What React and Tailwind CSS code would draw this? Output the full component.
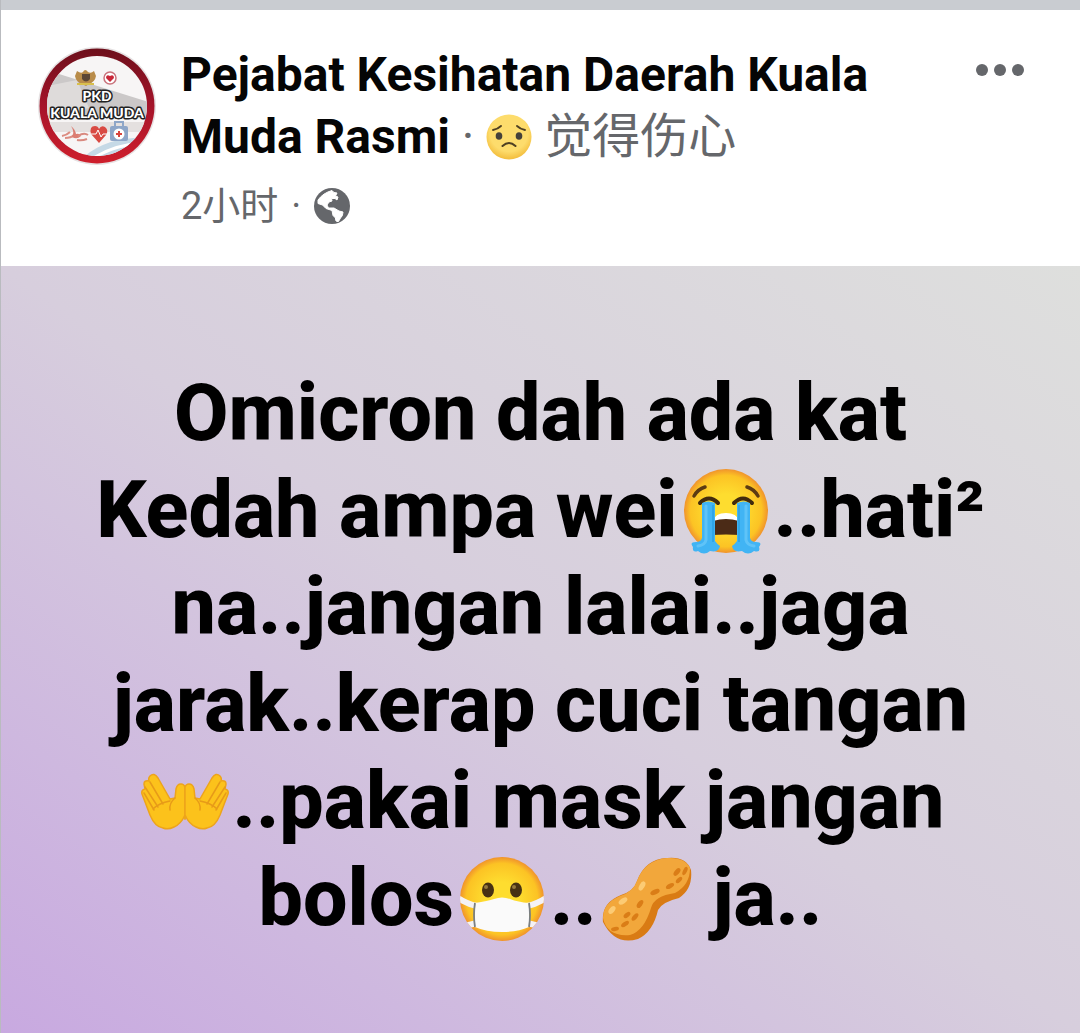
import { useState } from "react";

const Logo = () => (
    <svg className="w-30 h-30 mt-0.5 shrink-0" viewBox="0 0 120 120" role="img" aria-label="PKD Kuala Muda">
        <defs>
            <linearGradient id="ring" x1="0" y1="0" x2="0" y2="1">
                <stop offset="0" stopColor="#6d0f1b" />
                <stop offset="0.5" stopColor="#a5142a" />
                <stop offset="1" stopColor="#cf1f2c" />
            </linearGradient>
            <clipPath id="disc">
                <circle cx="60" cy="60" r="50" />
            </clipPath>
        </defs>
        <circle cx="60" cy="60" r="59" fill="#e6e2e3" />
        <circle cx="60" cy="60" r="57.5" fill="url(#ring)" />
        <circle cx="60" cy="60" r="50" fill="#f7f5f5" />
        <g clipPath="url(#disc)">
            <path d="M22 28 L112 56 V72 H10 V40 Z" fill="#cbc8c8" />
            <path d="M10 40 L40 34 L52 62 L10 70 Z" fill="#dedbda" />
            <path d="M10 76 H112 V86 H10 Z" fill="#e4e0df" />
            <path d="M48 110 Q72 90 112 92 V116 H48 Z" fill="#c5d9e6" />
            <path d="M58 111 Q82 97 106 98" stroke="#fff" strokeWidth="3" fill="none" />
        </g>
        {/* Coat of arms */}
        <path d="M40 25 q4 3 6 1 q2 -4 5 0 q3 2 6 -1 l2 5 q-1 6 -7 8 l-3 2 l-4 -2 q-6 -2 -7 -8z" fill="#b98c4a" />
        <path d="M45 28 h8 v5 q-4 5 -8 0z" fill="#5b4636" />
        <path d="M40 38 h17" stroke="#d8bf4c" strokeWidth="2" />
        <circle cx="73" cy="32" r="6" fill="#fff" stroke="#c9737c" strokeWidth="1.5" />
        <path d="M73 36 l-4 -4 q0 -4 4 -2 q4 -2 4 2z" fill="#c92637" />
        {/* Ribbon, heart and first aid kit */}
        <path d="M25 90 q5 -1 8 -4 M28 92 q6 0 9 -3" stroke="#dc8d82" strokeWidth="2" fill="none" />
        <path d="M34 80 q4 3 5 8 q4 -1 5 2 q-4 4 -9 1 q3 -5 -1 -11z" fill="#dc7d72" />
        <path d="M41 90 q6 -4 10 -1 M40 94 q5 1 10 -1" stroke="#d98a80" strokeWidth="2" fill="none" />
        <path d="M62 97 L54 88 q-2 -8 4 -8 q3 0 4 3 q2 -4 6 -2 q4 3 1 8z" fill="#d94a43" />
        <path d="M54 88 h5 l2 -4 3 7 2 -3 h4" stroke="#fff" strokeWidth="1" fill="none" />
        <rect x="73" y="80" width="18" height="15" rx="2" fill="#8ea6c8" />
        <path d="M78 80 v-4 h8 v4" stroke="#8ea6c8" strokeWidth="2" fill="none" />
        <circle cx="82" cy="88" r="5.5" fill="#fff" />
        <path d="M82 85 v6 M79 88 h6" stroke="#d8453e" strokeWidth="2" />
        <g
            fill="#fff"
            stroke="#222"
            strokeWidth="3"
            paintOrder="stroke"
            strokeLinejoin="round"
            textAnchor="middle"
            fontFamily="Lato, sans-serif"
            fontWeight="900"
        >
            <text x="60" y="55" fontSize="14">PKD</text>
            <text x="60" y="72" fontSize="14">KUALA MUDA</text>
        </g>
    </svg>
);

const Globe = () => (
    <svg className="w-9 h-9" viewBox="0 0 36 36" role="img" aria-label="Public">
        <circle cx="18" cy="18" r="18" fill="#65676b" />
        <path
            d="M4 12 Q9 5 18 2.5 L20 4.5 L23 5 L21.5 8 L24 9 L23 12 L21 10.5 L17.5 10.5 L18 13 L15 14 L13 17 L14.5 20 L20 20 L25 23 L29 24 Q29 28 26.5 30 L24.5 33.5 Q21 34 21.5 30 L19 27.5 L18 22.5 L12 20.5 L8.5 17 L4 15.5 Z"
            fill="#fff"
            stroke="#fff"
            strokeLinejoin="round"
        />
    </svg>
);

const SadFace = () => (
    <svg className="inline-block w-[46px] h-[46px] align-[-7px]" viewBox="0 0 46 46" role="img" aria-label="Sad">
        <defs>
            <radialGradient id="sad" cx="0.5" cy="0.4" r="0.6">
                <stop offset="0.7" stopColor="#fddc6c" />
                <stop offset="1" stopColor="#f3bd3c" />
            </radialGradient>
        </defs>
        <circle cx="23" cy="23" r="22.5" fill="url(#sad)" />
        <ellipse cx="13" cy="22" rx="3.3" ry="3.8" fill="#45413a" />
        <ellipse cx="33" cy="22" rx="3.3" ry="3.8" fill="#45413a" />
        <path d="M7 16 Q12 15 15 12 M39 16 Q34 15 31 12" stroke="#4f4022" strokeWidth="1.8" fill="none" strokeLinecap="round" />
        <path d="M16.5 32 Q23 26 29.5 32" stroke="#4f4022" strokeWidth="2" fill="none" strokeLinecap="round" />
    </svg>
);

const FaceGradient = ({ id }) => (
    <radialGradient id={id} cx="0.5" cy="0.5" r="0.5">
        <stop offset="0.4" stopColor="#fedd2f" />
        <stop offset="0.85" stopColor="#fcc324" />
        <stop offset="1" stopColor="#f0932c" />
    </radialGradient>
);

const CryingFace = () => (
    <svg className="inline-block w-[88px] h-[88px] mx-1 align-[-19px]" viewBox="0 0 88 88" role="img" aria-label="Crying">
        <defs>
            <FaceGradient id="cry" />
        </defs>
        <circle cx="44" cy="43" r="42" fill="url(#cry)" />
        <path d="M12 28 Q16 21 23 19 M76 28 Q72 21 65 19" stroke="#5c3b13" strokeWidth="3.5" fill="none" strokeLinecap="round" />
        <path d="M18 35 Q27 26 36 35 M52 35 Q61 26 70 35" stroke="#422b0d" strokeWidth="4" fill="none" strokeLinecap="round" />
        <path d="M30 67 Q29 46 44 46 Q59 46 58 67 Q44 66 30 67Z" fill="#4b2b17" />
        <path d="M31 53 Q33 45 44 45 Q55 45 57 53 Q44 49 31 53Z" fill="#fff" />
        <path
            d="M20 35 Q26 32 33 35 V73 Q35 76 38 78 Q37 85 28 83 Q22 88 16 83 Q10 85 11 79 Q7 74 14 74 Q19 74 20 70Z"
            fill="#41b4f4"
        />
        <path
            d="M68 35 Q62 32 55 35 V73 Q53 76 50 78 Q51 85 60 83 Q66 88 72 83 Q79 85 77 79 Q81 74 74 74 Q69 74 68 70Z"
            fill="#41b4f4"
        />
        <path d="M24 38 V72 Q23 77 16 78 M64 38 V72 Q65 77 72 78" stroke="#5fc3f8" strokeWidth="3" fill="none" strokeLinecap="round" />
        <path d="M31 37 V74 M57 37 V74" stroke="#2fa5e8" strokeWidth="2" fill="none" />
    </svg>
);

const Hand = () => (
    <>
        <path
            d="M44 46 V14 Q43 11 40 11 Q36 11 35 16 L34 25 L29 26 L17 5 Q13 -1 9 3 Q7 5 8 8 Q3 7 3 11 L4 16 Q0 17 1 21 L9 42 Q14 54 22 55 Q27 57 33 54 Q40 51 44 42Z"
            fill="#fcc21b"
            stroke="#eda41b"
            strokeWidth="1.5"
            strokeLinejoin="round"
        />
        <path
            d="M9 9 L22 31 M4 14 L17 34 M3 20 L13 37 M12 36 Q18 30 29 28 M34 25 Q28 30 29 37"
            stroke="#e79b18"
            strokeWidth="1.5"
            fill="none"
            strokeLinecap="round"
        />
    </>
);

const OpenHands = () => (
    <svg className="inline-block w-[88px] h-[58px] mx-1 align-[-3px]" viewBox="0 0 88 58" role="img" aria-label="Open hands">
        <Hand />
        <g transform="translate(88 0) scale(-1 1)">
            <Hand />
        </g>
    </svg>
);

const MaskFace = () => (
    <svg className="inline-block w-[88px] h-[88px] mx-1 align-[-19px]" viewBox="0 0 88 88" role="img" aria-label="Face with mask">
        <defs>
            <FaceGradient id="mask" />
            <clipPath id="maskFace">
                <circle cx="44" cy="43" r="42" />
            </clipPath>
        </defs>
        <circle cx="44" cy="43" r="42" fill="url(#mask)" />
        <g clipPath="url(#maskFace)">
            <path d="M0 42 Q9 48 19 50 M88 42 Q79 48 69 50 M4 70 Q12 69 19 67 M84 70 Q76 69 69 67" stroke="#f4f2f5" strokeWidth="6" fill="none" />
        </g>
        <ellipse cx="30" cy="34" rx="6" ry="7.5" fill="#473113" />
        <ellipse cx="58" cy="34" rx="6" ry="7.5" fill="#473113" />
        <circle cx="28" cy="31" r="2" fill="#96793e" />
        <circle cx="56" cy="31" r="2" fill="#96793e" />
        <path d="M17 47 Q30 45 36 43 Q44 40 52 43 Q60 46 71 47 V71 Q60 76 44 76 Q28 76 17 71Z" fill="#fafafa" />
        <path d="M17 47 Q15 59 17 71 M71 47 Q73 59 71 71" stroke="#7a7f82" strokeWidth="1.8" fill="none" />
    </svg>
);

const Peanut = () => (
    <svg className="inline-block w-[92px] h-[88px] ml-1 align-[-19px]" viewBox="0 0 92 88" role="img" aria-label="Peanut">
        <path
            d="M2 66 Q0 47 20 39 Q33 35 36 25 Q44 3 66 2 Q85 0 90 14 Q92 33 78 42 Q61 46 57 54 Q52 76 37 83 Q14 90 2 66Z"
            fill="#d97b14"
        />
        <path
            d="M2 62 Q2 47 19 40 Q32 36 36 25 Q44 4 66 2 Q84 1 89 12 Q89 29 74 37 Q53 40 50 52 Q43 75 29 79 Q6 81 2 62Z"
            fill="#f2a73b"
        />
        <g fill="#da7d17">
            <ellipse cx="76" cy="16" rx="4.5" ry="2.4" transform="rotate(-50 76 16)" />
            <ellipse cx="84" cy="15" rx="4.5" ry="2" transform="rotate(-65 84 15)" />
            <ellipse cx="78" cy="24" rx="4" ry="2" transform="rotate(-45 78 24)" />
            <ellipse cx="69" cy="30" rx="4.5" ry="2.2" transform="rotate(-30 69 30)" />
            <ellipse cx="54" cy="36" rx="5" ry="2.4" transform="rotate(-25 54 36)" />
            <ellipse cx="39" cy="48" rx="4.5" ry="2.4" transform="rotate(-55 39 48)" />
            <ellipse cx="26" cy="59" rx="4" ry="2.2" transform="rotate(-40 26 59)" />
            <ellipse cx="34" cy="61" rx="4.5" ry="2.2" transform="rotate(-50 34 61)" />
            <ellipse cx="24" cy="68" rx="4.5" ry="2.2" transform="rotate(-35 24 68)" />
            <ellipse cx="14" cy="73" rx="4" ry="2" transform="rotate(-10 14 73)" />
        </g>
        <g fill="#fccb74">
            <ellipse cx="41" cy="30" rx="5" ry="2.6" transform="rotate(-60 41 30)" />
            <ellipse cx="22" cy="45" rx="5" ry="2.6" transform="rotate(-35 22 45)" />
            <ellipse cx="11" cy="54" rx="4.5" ry="2.6" transform="rotate(-50 11 54)" />
        </g>
    </svg>
);

const App = () => {
    const [menuOpen, setMenuOpen] = useState(false);

    return (
        <article className="min-h-screen flex flex-col bg-white border-l border-[#b9bbbf] font-[Roboto,'Noto_Sans_CJK_SC',sans-serif]">
            <div className="h-[10px] bg-[#c9ccd1]" />

            {/* Post header */}
            <header className="flex items-start pl-9 pr-14 pt-[34px] pb-[30px]">
                <Logo />
                <div className="flex-1 ml-6">
                    <h1 className="text-[48px] leading-[62px] font-normal text-[#65676b]">
                        <a href="#page" className="font-bold text-[#050505]">
                            Pejabat Kesihatan Daerah Kuala
                            <br />
                            Muda Rasmi
                        </a>{" "}
                        · <SadFace /> 觉得伤心
                    </h1>
                    <div className="flex items-center gap-[13px] mt-2 text-[38px] leading-[60px] text-[#65676b]">
                        <span>2小时</span>
                        <span>·</span>
                        <Globe />
                    </div>
                </div>
                <button
                    type="button"
                    aria-label="More"
                    aria-expanded={menuOpen}
                    onClick={() => setMenuOpen(!menuOpen)}
                    className="flex gap-[6px] py-5 cursor-pointer"
                >
                    <span className="w-3 h-3 rounded-full bg-[#65676b]" />
                    <span className="w-3 h-3 rounded-full bg-[#65676b]" />
                    <span className="w-3 h-3 rounded-full bg-[#65676b]" />
                </button>
            </header>

            {/* Post text on its coloured background */}
            <div className="flex-1 flex items-center justify-center pt-3 bg-linear-to-tr from-[#c8a9e0] via-[#d7cedd] to-[#dedfdd]">
                <p className="text-center whitespace-nowrap text-[79px] leading-[97px] font-extrabold text-black">
                    Omicron dah ada kat
                    <br />
                    Kedah ampa wei
                    <CryingFace />
                    ..hati²
                    <br />
                    na..jangan lalai..jaga
                    <br />
                    jarak..kerap cuci tangan
                    <br />
                    <OpenHands />
                    ..pakai mask jangan
                    <br />
                    bolos
                    <MaskFace />
                    ..
                    <Peanut /> ja..
                </p>
            </div>
        </article>
    );
};

export default App;
